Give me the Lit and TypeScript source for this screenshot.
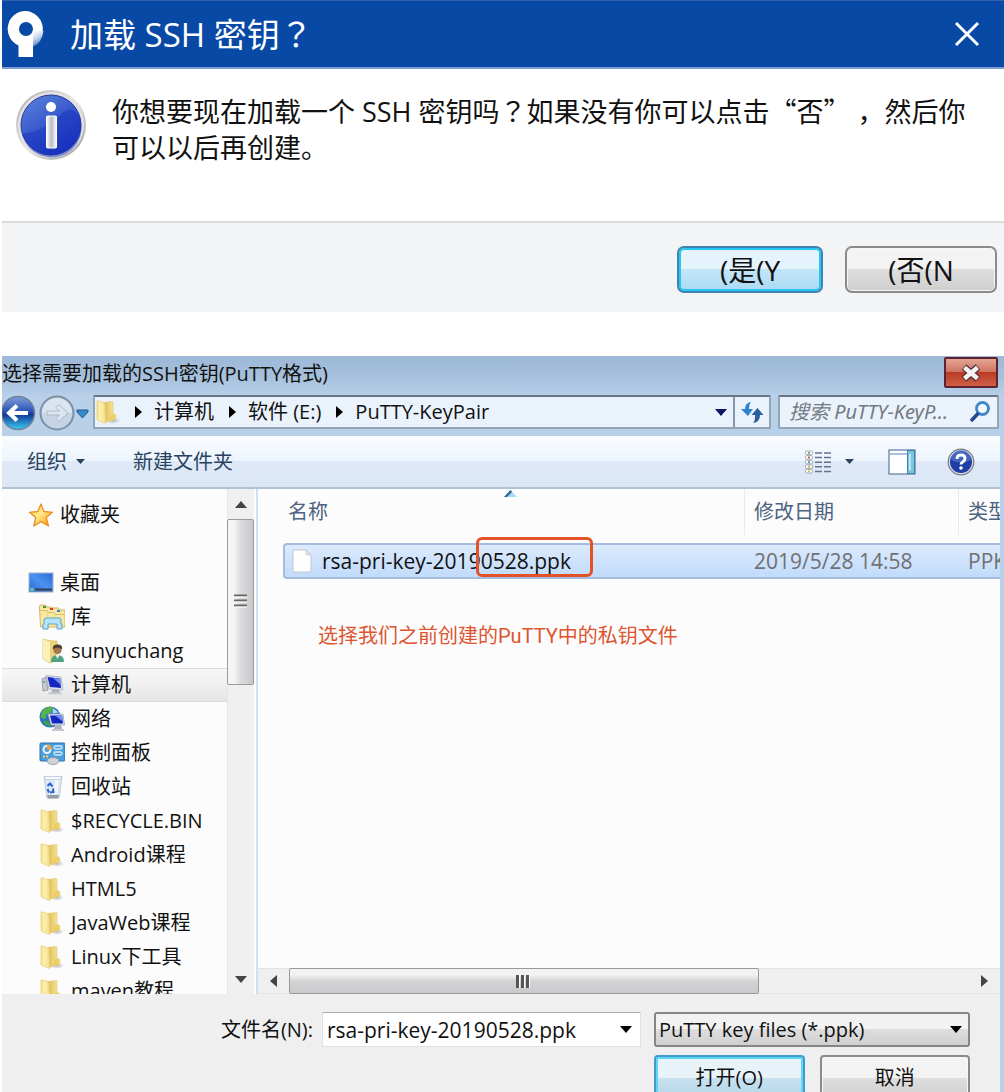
import { LitElement, html, css, svg, nothing, TemplateResult } from "lit";
import { customElement, property, state } from "lit/decorators.js";
import { classMap } from "lit/directives/class-map.js";

const folderIcon = html`<svg class="icon" viewBox="0 0 26 26" width="26" height="26" aria-hidden="true">
  <defs>
    <linearGradient id="fa" x1="0" x2="1"><stop offset="0" stop-color="#f3dc84" /><stop offset=".35" stop-color="#fbefb0" /><stop offset="1" stop-color="#f5e08c" /></linearGradient>
    <linearGradient id="fb" x1="0" x2="1"><stop offset="0" stop-color="#d8b64e" /><stop offset=".45" stop-color="#ecd277" /><stop offset="1" stop-color="#f8ecae" /></linearGradient>
    <radialGradient id="fs"><stop offset="0" stop-color="#777" stop-opacity=".5" /><stop offset="1" stop-color="#777" stop-opacity="0" /></radialGradient>
  </defs>
  <ellipse cx="18" cy="21.500" rx="7" ry="3.500" fill="url(#fs)" />
  <path d="M8 3.500 L17 2.500 Q18 2.500 18 3.500 L18 14 L20 15 Q21 15.500 21 17 L20.500 20 L10 23.500z" fill="url(#fb)" stroke="#e0c670" stroke-width=".6" />
  <path d="M2 2 Q2.500 1.500 4 2 L9 3.800 Q10 4.200 10 5.500 L10.500 24.500 L3 21.500 Q2 21 2 20z" fill="url(#fa)" stroke="#e8cf7a" stroke-width=".7" />
  <path d="M16 15 q4-1 4.500 1.500 L20 20 L14 22z" fill="#ecca55" opacity=".8" />
</svg>`;

const icons: Record<string, TemplateResult> = {
  folder: folderIcon,
  star: html`<svg class="icon" viewBox="0 0 26 26" width="26" height="26" aria-hidden="true">
    <defs><linearGradient id="st" x1="0" x2="1" y1="0" y2="1"><stop offset="0" stop-color="#ffd030" /><stop offset=".45" stop-color="#ffec8a" /><stop offset="1" stop-color="#f98c04" /></linearGradient></defs>
    <path d="M13 2 L16 9.500 L24.500 10.300 L18.200 15.500 L20.500 24 L13 19.600 L5.800 24 L7.800 15.500 L1.500 10.300 L9.800 9.500z" fill="url(#st)" stroke="#ec8f22" stroke-width="1.300" stroke-linejoin="round" />
  </svg>`,
  desktop: html`<svg class="icon" viewBox="0 0 26 26" width="26" height="26" aria-hidden="true">
    <defs><linearGradient id="dk" x1="0" x2="1" y1="1" y2="0"><stop offset="0" stop-color="#2a62d0" /><stop offset=".5" stop-color="#4a92f2" /><stop offset="1" stop-color="#2f69d6" /></linearGradient></defs>
    <rect x="1" y="3" width="24" height="19" fill="url(#dk)" stroke="#9fb3cf" />
    <path d="M1.500 18.500h23v3h-23z" fill="#5a7fb8" />
    <path d="M7 19.500h17" stroke="#2c405f" stroke-width="2" /><circle cx="4" cy="19.500" r="2" fill="#57c0b2" />
  </svg>`,
  library: html`<svg class="icon" viewBox="0 0 26 26" width="26" height="26" aria-hidden="true">
    <path d="M0.500 3q0-2 2-2h4l1 2h5l1 1h6l1 2h5.500v17H1.500z" fill="#f8e8a4" stroke="#cfae52" stroke-width=".9" />
    <path d="M1 6.500h7l1 2h6l1 2h9" fill="none" stroke="#d8bb62" /><path d="M8 6v17M16 9v14" stroke="#e6cf82" stroke-width=".8" />
    <path d="M4 3h3" stroke="#3f9b38" stroke-width="2" /><path d="M11 5h3" stroke="#e33b2e" stroke-width="2" /><path d="M18 7h3" stroke="#3c7fd0" stroke-width="2" />
    <path d="M5 16q0-2 2-2h13q2 0 2 2v4h1v5h-5v-5H9v5H4v-5h1z" fill="#b8e2f6" stroke="#5ba6cf" />
  </svg>`,
  user: html`<svg class="icon" viewBox="0 0 26 26" width="26" height="26" aria-hidden="true">
    <path d="M4 1 L12 3 L18 3 L18 22 L11 25 L4 21z" fill="#ecd27a" stroke="#d8bb62" stroke-width=".8" />
    <path d="M4 1 L11 4 L11 25 L4 21z" fill="#fbf0b8" />
    <path d="M12 24q0-7 6.500-7t6.500 7z" fill="#4fa383" /><path d="M16.500 17l2 4 2-4z" fill="#e8f0ea" />
    <circle cx="18.500" cy="12" r="4" fill="#a8764c" /><path d="M14 11.500q-1-5 4.500-5t4.500 5q-2-2-4.500-2t-4.500 2z" fill="#4b3b2e" />
  </svg>`,
  computer: html`<svg class="icon" viewBox="0 0 26 26" width="26" height="26" aria-hidden="true">
    <path d="M3 7l4-2 2 13-5 1z" fill="#c4cbd2" stroke="#7f8a94" stroke-width=".7" /><path d="M4 10h2" stroke="#4bb04a" stroke-width="1.500" />
    <path d="M7 3.500 L22 5 L24 18 L10 17z" fill="#dfe4ec" stroke="#a3adba" stroke-width=".8" />
    <path d="M8.500 5 L21 6.500 L22 16 L11 15z" fill="#1526c0" /><path d="M14 6 L21 6.800 L21.800 13z" fill="#6f8df2" />
    <path d="M14 17l6 1 2 4H11z" fill="#aab2be" /><path d="M9 21.500h14" stroke="#c9ced6" stroke-width="2" />
  </svg>`,
  network: html`<svg class="icon" viewBox="0 0 26 26" width="26" height="26" aria-hidden="true">
    <circle cx="11" cy="11" r="10.500" fill="#2b6fc4" /><path d="M2.500 6q5-7 12-4.500l-3 5.500-4 1-1 5-5-1z" fill="#56b34b" /><path d="M5 14l5 2 2 5q-6-1-8-5z" fill="#3f9f47" />
    <path d="M14 2l5.500 4.500-6 1z" fill="#a6dcf4" />
    <path d="M9 8 L24 8 L25.500 19 L12 19z" fill="#dfe4ec" stroke="#98a3b2" stroke-width=".8" /><path d="M11 9.500h12l1 8H13z" fill="#1526c0" /><path d="M16 9.500h7l.8 6z" fill="#6f8df2" />
    <path d="M16 19h6l1 4h-8z" fill="#aab2be" /><path d="M13 24h12" stroke="#c4c9d2" stroke-width="2" />
  </svg>`,
  control: html`<svg class="icon" viewBox="0 0 26 26" width="26" height="26" aria-hidden="true">
    <rect x="1" y="3" width="25" height="18" rx="1" fill="#4a9ede" stroke="#2d72b4" />
    <circle cx="8" cy="9.500" r="3.500" fill="none" stroke="#e8f4fc" stroke-width="2" /><path d="M8 9.500V4.500a5 5 0 0 1 5 5z" fill="#f3a338" />
    <rect x="15" y="6" width="8" height="3" rx="1.500" fill="none" stroke="#d8ecfa" stroke-width="1.300" /><rect x="15" y="12" width="8" height="3" rx="1.500" fill="none" stroke="#d8ecfa" stroke-width="1.300" />
    <path d="M4 16.500h6" stroke="#f6d060" stroke-width="2" stroke-dasharray="2 1" />
    <ellipse cx="14" cy="21" rx="6" ry="3.500" fill="#cfd2d6" stroke="#8d949c" stroke-width=".8" />
  </svg>`,
  recycle: html`<svg class="icon" viewBox="0 0 26 26" width="26" height="26" aria-hidden="true">
    <path d="M5 2.500 L23 2.500 L20 24 L8 24z" fill="#dde8f4" stroke="#b4c2d2" stroke-width=".8" /><path d="M5 2.500h18l-2 3H7z" fill="#f7fafc" stroke="#b9c6d4" stroke-width=".7" />
    <path d="M16 6h4l-2 14h-3z" fill="#fff" opacity=".6" /><path d="M8 21h12l-1 3.500H9z" fill="#959da6" />
    <path d="M8.500 12l2.500-2.500 2.500 3M14 14.500l.5 3.500-3.500.5M10 18.500l-1.500-3.500" fill="none" stroke="#2a62cf" stroke-width="2" />
  </svg>`,
  file: html`<svg class="icon" viewBox="0 0 22 26" width="22" height="26" aria-hidden="true">
    <path d="M2 2h13l5 5v17H2z" fill="#fdfdfd" stroke="#c3c7cc" /><path d="M15 2v5h5z" fill="#e2e5e9" stroke="#c3c7cc" stroke-width=".7" />
  </svg>`,
};

const triangle = (dir: "up" | "down" | "left" | "right", w = 12, h = 7, color = "#000") => {
  const pts = {
    down: `0,0 ${w},0 ${w / 2},${h}`,
    up: `0,${h} ${w},${h} ${w / 2},0`,
    right: `0,0 ${w},${h / 2} 0,${h}`,
    left: `${w},0 0,${h / 2} ${w},${h}`,
  }[dir];
  return html`<svg class="tri" width=${w} height=${h} viewBox="0 0 ${w} ${h}" aria-hidden="true">${svg`<polygon points=${pts} fill=${color} />`}</svg>`;
};

const shared = css`
  * { box-sizing: border-box; }
  :host {
    font-family: "Open Sans", "Noto Sans CJK SC", sans-serif;
    font-size: 20px;
    line-height: 28px;
    color: #111;
  }
  button { font: inherit; color: inherit; margin: 0; padding: 0; border: 0; background: none; }
  svg { display: block; flex: none; }
  a { color: inherit; text-decoration: none; }
  .glass {
    border: 2px solid #8a8a8a;
    border-radius: 7px;
    background: linear-gradient(#f3f3f3 0 50%, #dedede 50%, #cfcfcf);
    box-shadow: inset 0 0 0 1px #f7f7f7;
  }
  .glass.primary {
    border-color: #3f83ae;
    background: linear-gradient(#e5f4fc 0 50%, #c3e6f9 50%, #a9daf4);
    box-shadow: inset 0 0 0 2px #27c6f4;
  }
`;

@customElement("ssh-prompt")
export class SshPrompt extends LitElement {
  static styles = [
    shared,
    css`
      :host { display: block; background: #fff; }
      .title {
        display: flex; align-items: center; height: 69px; padding: 0 24px 0 2px;
        background: #0849a6; border-top: 1px solid #2e62ad; border-bottom: 2px solid #7c9ed2; color: #fff;
      }
      .title h1 { flex: 1; margin: 0 0 0 26px; font: 400 33px/44px "Open Sans", "Noto Sans CJK SC", sans-serif; }
      .body { display: flex; gap: 25px; min-height: 152px; padding: 20px 20px 24px 11px; }
      .body p { flex: 1; margin: 4px 0 0; font-size: 27px; line-height: 36px; }
      .cjk { font-family: "Noto Sans CJK SC", sans-serif; }
      .mid { font-family: "Noto Sans CJK JP", sans-serif; }
      .actions {
        display: flex; justify-content: flex-end; gap: 22px; padding: 23px 7px 19px;
        background: #f3f4f6; border-top: 2px solid #dcdcdc;
      }
      .actions button { width: 152px; height: 47px; font-size: 28px; line-height: 36px; }
      .actions .primary { width: 146px; }
    `,
  ];

  render() {
    return html`
      <header class="title">
        <svg width="40" height="50" viewBox="0 0 40 50" aria-hidden="true">
          <defs><linearGradient id="lg" x1=".2" y1="0" x2=".6" y2="1"><stop offset="0" stop-color="#fff" /><stop offset=".45" stop-color="#c3d3ea" /><stop offset="1" stop-color="#3c6fba" /></linearGradient></defs>
          <path d="M21.500 2 A18 18 0 0 0 14.500 36.500 V48 H29 V36 A18 18 0 0 0 21.500 2z M22 13 a7 7 0 1 1 0 14 a7 7 0 1 1 0-14z" fill="#fff" fill-rule="evenodd" />
          <path d="M28.500 22 H39.500 Q38 34 29 37.500 V28 Q29 25 28.500 22z" fill="url(#lg)" />
        </svg>
        <h1 lang="zh">加载 SSH 密钥<span class="mid" lang="ja">？</span></h1>
        <button aria-label="关闭"><svg width="26" height="26" viewBox="0 0 26 26"><path d="M2 2l22 22M24 2L2 24" stroke="#fff" stroke-width="3" /></svg></button>
      </header>
      <section class="body">
        <svg width="74" height="74" viewBox="0 0 74 74" aria-hidden="true">
          <defs>
            <linearGradient id="ring" x1="0" y1="0" x2="1" y2="1"><stop offset="0" stop-color="#a9a9a9" /><stop offset=".5" stop-color="#e8e8e8" /><stop offset="1" stop-color="#969696" /></linearGradient>
            <linearGradient id="ball" x1="0" y1="0" x2=".6" y2="1"><stop offset="0" stop-color="#5c86dc" /><stop offset="1" stop-color="#1a33bf" /></linearGradient>
            <linearGradient id="stem" x1="0" x2="1"><stop offset="0" stop-color="#fff" /><stop offset=".5" stop-color="#b9bdc8" /><stop offset="1" stop-color="#fff" /></linearGradient>
          </defs>
          <circle cx="38" cy="36" r="35" fill="url(#ring)" /><circle cx="38" cy="36" r="33" fill="#e4e2e0" /><circle cx="38" cy="36" r="30" fill="url(#ball)" stroke="#26399a" />
          <path d="M9 45 Q34 41 46 27 T67 29 A30 30 0 0 1 10 48z" fill="#1731bd" opacity=".5" />
          <circle cx="38" cy="18" r="5" fill="#fff" /><rect x="33.500" y="27" width="10" height="32" rx="1" fill="url(#stem)" stroke="#fff" />
        </svg>
        <p lang="zh">你想要现在加载一个 SSH 密钥吗<span class="mid" lang="ja">？</span>如果没有你可以点击<span class="cjk">“否”</span> ，然后你可以以后再创建。</p>
      </section>
      <footer class="actions">
        <button class="glass primary">(是(Y</button>
        <button class="glass">(否(N</button>
      </footer>
    `;
  }
}

@customElement("scroll-track")
export class ScrollTrack extends LitElement {
  @property({ type: Boolean, reflect: true }) vertical = false;
  @property({ type: Number }) start = 0;
  @property({ type: Number }) size = 50;

  static styles = [
    shared,
    css`
      :host { display: flex; background: #efefef; box-shadow: inset 0 1px #e2e2e2, inset 0 -1px #e6e6e6; }
      :host([vertical]) { flex-direction: column; width: 27px; background: #f0f0f0; box-shadow: inset 1px 0 #e4e4e4; }
      button { display: grid; place-items: center; flex: 0 0 31px; height: 26px; }
      :host([vertical]) button { flex-basis: 30px; width: 27px; height: auto; }
      .rail { flex: 1; display: flex; min-width: 0; min-height: 0; }
      :host([vertical]) .rail { flex-direction: column; }
      .thumb {
        display: grid; place-items: center; border: 1px solid #9a9a9a; border-radius: 2px;
        background: linear-gradient(#f2f2f2 0 25%, #d4d4d6 50%, #cacacc);
      }
      :host([vertical]) .thumb { background: linear-gradient(90deg, #f5f5f5 0 25%, #dcdce0 50%, #c8c8ca); }
    `,
  ];

  render() {
    const v = this.vertical;
    const bars = [1, 6, 11];
    return html`
      <button aria-label=${v ? "向上滚动" : "向左滚动"}>${v ? triangle("up", 12, 7, "#444") : triangle("left", 7, 12, "#444")}</button>
      <div class="rail">
        <div style="flex: ${this.start} 0 0px"></div>
        <div class="thumb" style="flex: ${this.size} 0 0px">
          <svg width="15" height="15" viewBox="0 0 15 15" aria-hidden="true">
            ${bars.map((b) => v
              ? svg`<path d="M1 ${b}.500h13" stroke="#666" stroke-width="2"/><path d="M1 ${b + 2}h13" stroke="#fff"/>`
              : svg`<path d="M${b}.500 1v13" stroke="#555" stroke-width="3"/><path d="M${b + 2}.500 1v13" stroke="#fff"/>`)}
          </svg>
        </div>
        <div style="flex: ${100 - this.start - this.size} 0 0px"></div>
      </div>
      <button aria-label=${v ? "向下滚动" : "向右滚动"}>${v ? triangle("down", 12, 7, "#444") : triangle("right", 7, 12, "#444")}</button>
    `;
  }
}

interface Place { icon: string; label: string; top?: boolean; gapAfter?: boolean }

const places: Place[] = [
  { icon: "star", label: "收藏夹", top: true, gapAfter: true },
  { icon: "desktop", label: "桌面", top: true },
  { icon: "library", label: "库" },
  { icon: "user", label: "sunyuchang" },
  { icon: "computer", label: "计算机" },
  { icon: "network", label: "网络" },
  { icon: "control", label: "控制面板" },
  { icon: "recycle", label: "回收站" },
  { icon: "folder", label: "$RECYCLE.BIN" },
  { icon: "folder", label: "Android课程" },
  { icon: "folder", label: "HTML5" },
  { icon: "folder", label: "JavaWeb课程" },
  { icon: "folder", label: "Linux下工具" },
  { icon: "folder", label: "maven教程" },
];

const crumbs = ["计算机", "软件 (E:)", "PuTTY-KeyPair"];

@customElement("file-dialog")
export class FileDialog extends LitElement {
  @state() private current = "计算机";

  static styles = [
    shared,
    css`
      :host { display: flex; flex-direction: column; min-height: 0; background: #b9d0e9; }
      .titlebar {
        display: flex; justify-content: space-between; height: 39px; padding: 0 6px 0 0;
        background: linear-gradient(#9db9d7, #a6c0dc 50%, #b6cee8);
      }
      .titlebar h2 { margin: 0; font-size: 20px; font-weight: 400; line-height: 36px; }
      .close {
        display: grid; place-items: center; width: 54px; height: 31px; margin-top: 1px;
        border: 2px solid #5c2430; border-radius: 2px; background: linear-gradient(#e3a595, #cf7362 48%, #b93a26 50%, #cf5f45);
      }
      .address { display: flex; align-items: center; height: 41px; padding: 0 5px 7px 0; }
      .nav { display: flex; width: 91px; }
      .nav button { flex: none; }
      .path, .search { height: 34px; border: 2px solid #93a5b9; border-top-color: #6a7684; border-radius: 2px; background: #eaf2fc; }
      .path { flex: 1; display: flex; align-items: center; min-width: 0; }
      .path ol { flex: 1; display: flex; align-items: center; margin: 0; padding: 0 0 0 14px; list-style: none; white-space: nowrap; }
      .path li { display: flex; align-items: center; }
      .path li a { padding: 0 15px 0 12px; }
      .path .drop { width: 24px; height: 30px; display: grid; place-items: center; }
      .path .refresh { width: 36px; height: 30px; border-left: 2px solid #8396ab; display: grid; place-items: center; }
      .search { display: flex; align-items: center; width: 221px; margin-left: 7px; padding-right: 6px; }
      .search input {
        appearance: none; flex: 1; min-width: 0; border: 0; padding: 0 0 0 9px; background: none; outline: 0;
        font: italic 20px/28px "Noto Sans", "Noto Sans CJK SC", sans-serif;
      }
      .search input::placeholder { color: #747a82; opacity: 1; }
      .toolbar {
        display: flex; align-items: center; height: 53px; margin-right: 4px; padding: 0 25px; color: #27435f;
        background: linear-gradient(#fafdff, #ecf4fd 48%, #dfe9f7 50%, #dce7f5); border-bottom: 2px solid #b0c2d8;
      }
      .toolbar button { display: flex; align-items: center; gap: 9px; }
      .toolbar .new { margin-left: 48px; margin-right: auto; }
      .toolbar .views { gap: 14px; margin-right: 34px; }
      .toolbar .preview { margin-right: 31px; }
      .main { flex: 1; display: flex; min-height: 0; margin-right: 4px; background: #fcfcfc; }
      .places { width: 225px; overflow: hidden; }
      .places ul { margin: 0; padding: 9px 0 0; list-style: none; }
      .places a { display: flex; align-items: center; gap: 6px; height: 34px; padding-left: 37px; white-space: nowrap; }
      .places a.top { padding-left: 26px; }
      .places li.gap { padding-bottom: 34px; }
      .places a.current { background: linear-gradient(#f8f8f8, #e6e6e6); box-shadow: inset 0 1px #dcdcdc, inset 0 -1px #dcdcdc; }
      .files { position: relative; flex: 1; display: flex; flex-direction: column; min-width: 0; margin-left: 2px; border-left: 2px solid #cde0f5; }
      .list { flex: 1; overflow: hidden; padding-left: 25px; }
      table { width: 100%; table-layout: fixed; border-collapse: separate; border-spacing: 0; }
      .date { width: 214px; }
      .type { width: 42px; }
      th, td { padding: 0 0 0 10px; text-align: left; font-weight: 400; white-space: nowrap; overflow: hidden; }
      thead th { height: 46px; color: #4d6380; border-left: 1px solid #e2ebf6; }
      thead th:nth-child(n + 2) { padding-left: 9px; }
      thead th:first-child { padding-left: 4px; border-left-color: transparent; }
      .space td { height: 8px; }
      .picked td { height: 36px; font-size: 21px; color: #707070; background: linear-gradient(#dceafc, #c1dbfc); border: solid #a3bce0; border-width: 2px 0; }
      .picked td:first-child { padding-left: 6px; color: #111; border-left-width: 2px; border-radius: 4px 0 0 4px; }
      .name { display: flex; align-items: center; gap: 9px; }
      .sort { position: absolute; left: 246px; top: 1px; }
      .mark { position: absolute; left: 218px; top: 48px; width: 117px; height: 40px; border: 3px solid #e35127; border-radius: 6px; }
      .note { margin: 43px 0 0 35px; color: #dd5530; font-family: Roboto, "Noto Sans CJK SC", sans-serif; white-space: nowrap; }
      .form {
        display: grid; grid-template-columns: 1fr 319px 316px; column-gap: 13px; row-gap: 8px; align-items: center;
        height: 98px; overflow: hidden; margin-right: 4px; padding: 18px 30px 0 0; background: #efefef; align-content: start;
      }
      .form label { text-align: right; margin-right: -4px; white-space: nowrap; }
      .combo { display: flex; align-items: center; height: 35px; background: #fff; border: 1px solid #dde2ea; border-top-color: #abadb3; }
      .combo input { flex: 1; min-width: 0; height: 31px; padding: 0 0 0 4px; border: 0; outline: 0; background: none; font: inherit; font-size: 21px; color: inherit; }
      .combo button { width: 28px; height: 31px; display: grid; place-items: center; }
      .filter { display: grid; align-items: center; }
      .filter select, .filter > svg { grid-area: 1 / 1; }
      .filter > svg { justify-self: end; margin-right: 8px; pointer-events: none; }
      .filter select {
        appearance: none; width: 100%; height: 35px; padding: 0 30px 0 3px; color: inherit; font: inherit;
        border: 2px solid #858585; border-radius: 3px; background: linear-gradient(#f2f2f2 0 50%, #dedede 50%, #d0d0d0);
      }
      .buttons { grid-column: 3; display: grid; grid-template-columns: 1fr 1fr; gap: 15px; }
      .buttons button { height: 46px; border-radius: 4px; }
      .buttons .primary { border-color: #3f9ccc; box-shadow: inset 0 0 0 2px #5fd5f8; background: linear-gradient(#e8f3f9 0 50%, #c9e2ef 50%, #b0d5e8); }
    `,
  ];

  private renderPlace(p: Place) {
    return html`<li class=${classMap({ gap: !!p.gapAfter })}>
      <a href="#" class=${classMap({ top: !!p.top, current: p.label === this.current })}
        aria-current=${p.label === this.current ? "true" : nothing}
        @click=${(e: Event) => { e.preventDefault(); this.current = p.label; }}>${icons[p.icon]}<span>${p.label}</span></a>
    </li>`;
  }

  render() {
    return html`
      <header class="titlebar">
        <h2>选择需要加载的SSH密钥(PuTTY格式)</h2>
        <button class="close" aria-label="关闭">
          <svg width="22" height="18" viewBox="0 0 22 18"><path d="M4 3l14 12M18 3L4 15" stroke="#54323a" stroke-width="7" /><path d="M4.500 3.500l13 11M17.500 3.500l-13 11" stroke="#f7f2f0" stroke-width="4.500" /></svg>
        </button>
      </header>
      <div class="address">
        <div class="nav">
          <button aria-label="后退"><svg width="36" height="38" viewBox="0 0 36 38">
            <defs><linearGradient id="bk" x1="0" y1="0" x2="0" y2="1"><stop offset="0" stop-color="#7f9fda" /><stop offset=".45" stop-color="#2a54b4" /><stop offset=".55" stop-color="#123a94" /><stop offset="1" stop-color="#38cdf5" /></linearGradient></defs>
            <circle cx="16" cy="20" r="16.500" fill="url(#bk)" stroke="#6f8198" stroke-width="1.500" />
            <path d="M26 20H8M15 12.500L7 20l8 7.500" fill="none" stroke="#fff" stroke-width="4" />
          </svg></button>
          <button aria-label="前进"><svg width="38" height="38" viewBox="0 0 38 38">
            <circle cx="19" cy="20" r="16.500" fill="#c5d4e6" stroke="#7f8fa4" stroke-width="2" /><path d="M4 20a15 15 0 0 1 30 0z" fill="#dbe5f0" />
            <path d="M30 20l-9-8.500-3 3 3.500 3.500H9v4h12.500L18 25.500l3 3z" fill="#dbe4ef" stroke="#aab9cb" />
          </svg></button>
          <button aria-label="最近位置"><svg width="13" height="38" viewBox="0 0 13 38"><path d="M1 17h11v2l-5.500 6L1 19z" fill="#3589c9" stroke="#255a94" /></svg></button>
        </div>
        <nav class="path" aria-label="路径">
          ${folderIcon}
          <ol>${crumbs.map((c) => html`<li>${triangle("right", 7, 12)}<a href="#">${c}</a></li>`)}</ol>
          <button class="drop" aria-label="历史位置">${triangle("down", 12, 7, "#0d1466")}</button>
          <button class="refresh" aria-label="刷新"><svg width="24" height="24" viewBox="0 0 24 24">
            <path d="M11 2q-6 1-6 7H1l7 7 5-7H9q-.5-4 2-7z" fill="#2d83cf" /><path d="M13 23q7-1 7-8h3.500l-6-7-6 7H15q.5 5-2 8z" fill="#2d5f9f" />
          </svg></button>
        </nav>
        <div class="search">
          <input type="search" aria-label="搜索" placeholder="搜索 PuTTY-KeyP..." />
          <svg width="22" height="24" viewBox="0 0 22 24" aria-hidden="true"><circle cx="13.500" cy="8.500" r="6" fill="#f4f9fe" stroke="#4087c9" stroke-width="2.800" /><path d="M9.500 13L2 21" stroke="#25478f" stroke-width="3.500" /></svg>
        </div>
      </div>
      <div class="toolbar">
        <button>组织 ${triangle("down", 9, 5, "#27435f")}</button>
        <button class="new">新建文件夹</button>
        <button class="views" aria-label="更改视图">
          <svg width="26" height="24" viewBox="0 0 26 24">
            ${["#55a05a", "#d8423c", "#3f80c9", "#c9a933", "#d6bf3d"].map((c, i) => svg`
              <rect x=".5" y=${1 + i * 4.6} width="7" height="3.600" rx="1" fill="#fff" stroke="#9aa3ac" stroke-width=".9"/>
              <rect x="3" y=${2 + i * 4.6} width="2" height="1.600" fill=${c}/>
              <path d="M10 ${3 + i * 4.6}h7M19 ${3 + i * 4.6}h7" stroke="#64748a" stroke-width="1.500"/>`)}
          </svg>
          ${triangle("down", 9, 5, "#27435f")}
        </button>
        <button class="preview" aria-label="预览窗格">
          <svg width="28" height="26" viewBox="0 0 28 26"><rect x="1" y="1" width="26" height="24" fill="#fff" stroke="#6484a8" stroke-width="1.300" /><path d="M2 5h17" stroke="#8facc9" stroke-width="1.500" /><rect x="19.500" y="1.500" width="7" height="23" fill="#79c6de" stroke="#3f83a8" /><path d="M22 5v16" stroke="#b9e6f2" stroke-width="2" /></svg>
        </button>
        <button aria-label="帮助">
          <svg width="28" height="28" viewBox="0 0 28 28"><circle cx="14" cy="14" r="12.800" fill="#d9dce0" stroke="#777e88" stroke-width="1.200" /><circle cx="14" cy="14" r="11" fill="#1f3da6" /><path d="M4 12a10 10 0 0 1 20 0q-10 5-20 0z" fill="#5478cc" opacity=".7" />
            <path d="M10 11q0-4 4-4t4 3.500q0 2-2 3.200t-2 2.800" fill="none" stroke="#fff" stroke-width="2.800" /><circle cx="14" cy="20" r="1.800" fill="#fff" /></svg>
        </button>
      </div>
      <div class="main">
        <nav class="places" aria-label="位置"><ul>${places.map((p) => this.renderPlace(p))}</ul></nav>
        <scroll-track vertical start="0" size="37"></scroll-track>
        <section class="files">
          <div class="list">
            <table>
              <colgroup><col /><col class="date" /><col class="type" /></colgroup>
              <thead><tr><th scope="col" aria-sort="ascending">名称</th><th scope="col">修改日期</th><th scope="col">类型</th></tr></thead>
              <tbody>
                <tr class="space" aria-hidden="true"><td colspan="3"></td></tr>
                <tr class="picked">
                  <td><div class="name">${icons.file}<span>rsa-pri-key-20190528.ppk</span></div></td>
                  <td>2019/5/28 14:58</td>
                  <td>PPK</td>
                </tr>
              </tbody>
            </table>
            <p class="note">选择我们之前创建的PuTTY中的私钥文件</p>
          </div>
          <svg class="sort" width="13" height="8" viewBox="0 0 13 8" aria-hidden="true"><path d="M0 7L6.500 0 13 7z" fill="#a8dcf2" /><path d="M0 7L6.500 0 8 2 3 7z" fill="#2f6890" /></svg>
          <div class="mark"></div>
          <scroll-track start="0" size="69"></scroll-track>
        </section>
      </div>
      <form class="form" @submit=${(e: Event) => e.preventDefault()}>
        <label for="filename">文件名(N):</label>
        <div class="combo">
          <input id="filename" type="text" .value=${"rsa-pri-key-20190528.ppk"} />
          <button type="button" aria-label="最近使用的文件">${triangle("down", 12, 7)}</button>
        </div>
        <div class="filter">
          <select aria-label="文件类型"><option>PuTTY key files (*.ppk)</option></select>
          ${triangle("down", 12, 7)}
        </div>
        <div class="buttons">
          <button class="glass primary">打开(O)</button>
          <button class="glass" type="button">取消</button>
        </div>
      </form>
    `;
  }
}

@customElement("app-root")
export class AppRoot extends LitElement {
  static styles = css`
    :host {
      box-sizing: border-box; display: flex; flex-direction: column; gap: 44px;
      height: 100vh; padding-left: 2px; overflow: hidden; background: #fff;
    }
    file-dialog { flex: 1; }
  `;

  render() {
    return html`<ssh-prompt></ssh-prompt><file-dialog></file-dialog>`;
  }
}
